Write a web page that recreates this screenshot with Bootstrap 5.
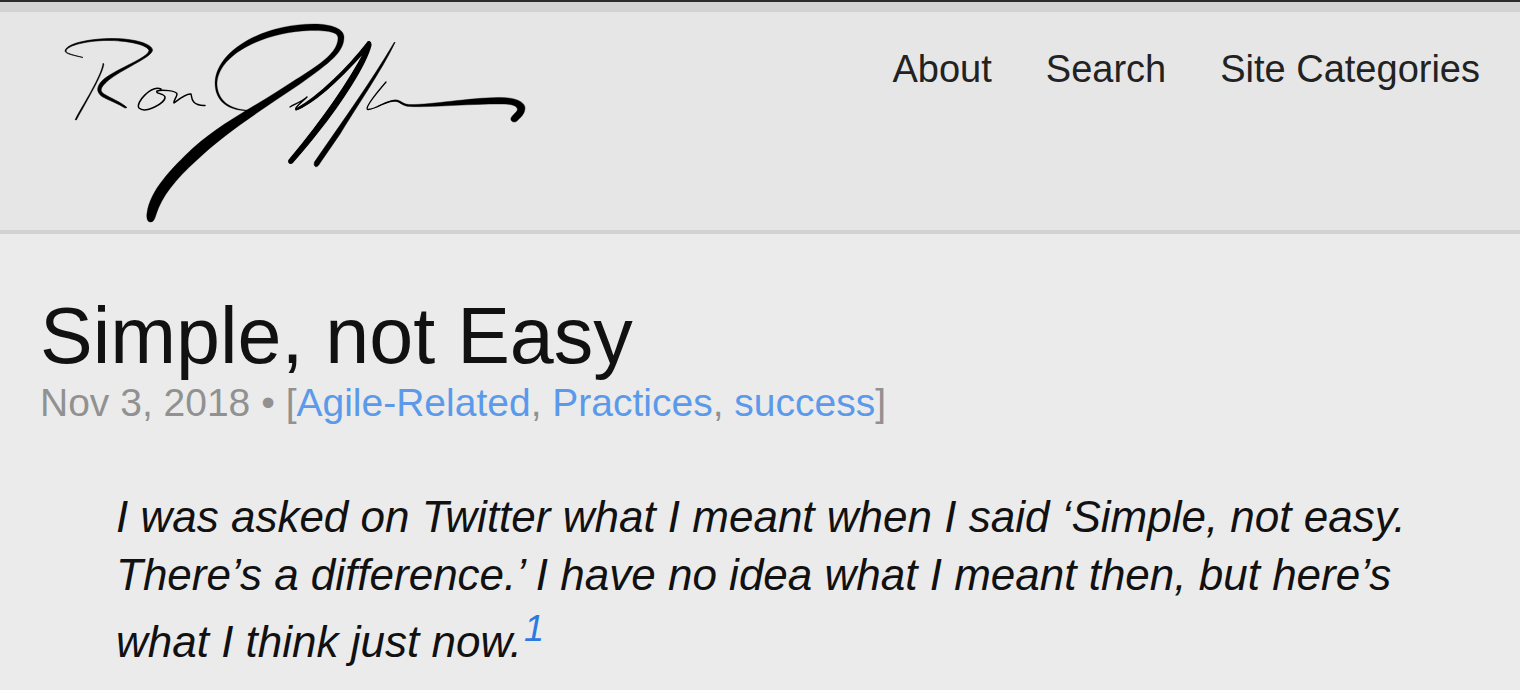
<!DOCTYPE html>
<html lang="en">
<head>
<meta charset="utf-8">
<meta name="viewport" content="width=device-width, initial-scale=1">
<title>Simple, not Easy</title>
<link href="https://cdn.jsdelivr.net/npm/bootstrap@5.3.0/dist/css/bootstrap.min.css" rel="stylesheet">
<style>
body{background:#ebebeb;color:#111;font-family:"Liberation Sans",Arial,sans-serif}
a{text-decoration:none}
.site-top{border-top:2px solid #2a2828;background:#e6e6e6;border-bottom:4px solid #d2d2d2}
.top-strip{height:10px;background:#d2d2d2}
.site-bar{padding:8px 40px 4px 60px}
.signature{width:470px;height:206px;display:block}
.site-menu{gap:54px;padding-top:20px}
.site-menu a{color:#222;font-size:38px;line-height:58px;padding:0}
.post{padding:58px 40px 24px}
.post-title{font-size:79px;line-height:88px;font-weight:400;margin:0}
.post-meta{font-size:39px;line-height:46px;color:#919191;margin:0}
.post-meta a{color:#5b9aea}
.intro{font-size:44px;line-height:58px;font-style:italic;margin:62px 38px 0 76px}
.intro sup{font-size:36px;line-height:50px;top:0;vertical-align:super;margin-left:2px}
.intro sup a{color:#2a7ae2}
</style>
</head>
<body>
<header class="site-top">
<div class="top-strip"></div>
<div class="site-bar d-flex flex-wrap justify-content-between align-items-start">
<a href="#" aria-label="Ron Jeffries">
<svg class="signature" viewBox="60 20 470 206" aria-hidden="true">
<path d="M83 57.5C76 56 65 54 65 51C66 43 92 38.5 112 38.5C135 38.5 152 44 152.5 50C152 57 128 66 110 79C99 88 100 91 104 94C110 98 121 102 127 107.5L125 108C119 104 108 100 102 96.500C96 92 96 86 104 79C118 68 148 58 149 50.5C147 45 130 41 111 40.5C90 40 67 45 66 51C66 53.5 74 55 83 57.5Z" stroke="#000" stroke-width=".6"/>
<path d="M103 63L104 64C103 73 92 92 76.5 120L75 120C78 112 101 78 103 63Z" stroke="#000" stroke-width=".3"/>
<path d="M161 89C151 85 135 103 139 108C145 114 166 103 165 97C164 93 155 94 157 91C162 89 177 91 177 94C177 97 173 101 174 103C178 100 186 93 191 94C192 96 190 106 205 105.5" fill="none" stroke="#000" stroke-width="1.5" stroke-linecap="round" stroke-linejoin="round"/>
<path d="M252 110.7C228 112 215 101 215 83C216 50 264 24 314 24C332 24 344 29 344 37C344 52 331 62 300 84C260 111 225 133 197 160C175 180 162 196 156 215C154 222 152 222 150 222C148 222 146 219 147 213C150 190 172 168 193 148C220 124 250 109 278 91C310 70 338 56 338 38C338 32 328 30.5 310 30.5C266 32 219 53 217 83C217 100 230 111 252 110Z" stroke="#000" stroke-width=".3"/>
<path d="M290 107C295 104 301 102 307 97C303 101 294 108 296 109.5C301 109 315 98 328 88" fill="none" stroke="#000" stroke-width="1.4" stroke-linecap="round" stroke-linejoin="round"/>
<path d="M296 109C320 96 349 66 367 43C369 40 371 42 371 45C366 65 341 103 318 132C308 145 300 154 293 162C290 165 287 162 290 159C314 130 345 89 365 51C348 70 319 101 296 110Z" stroke="#000" stroke-width="1.2" stroke-linejoin="round"/>
<path d="M394.5 42L395 42.5C382 70 355 109 340 134L320 163C317 169 313 167 314.5 162C342 122 371 82 394.5 42Z" stroke="#000" stroke-width=".6"/>
<path d="M386 82C380 89 363 109 368 109.5C377 109 387 100 396 100.5C400 101 402 105 408 105.5" fill="none" stroke="#000" stroke-width="1.3" stroke-linecap="round" stroke-linejoin="round"/>
<path d="M378 106C386 102 392 100 396 100C401 100 402 104 409 104.5C430 105 467 98 498 97.5C513 97 525 101 525 108C525 114 520 118 517 121C514 123.5 510 121 511 118C513 114 519 111 517 108C515 105 510 104 500 104C467 104 430 107.5 410 106.5C401 106 401 102 396 101.5C391 101 386 103 378 106Z" stroke="#000" stroke-width=".4"/>
</svg>
</a>
<nav class="site-menu nav" aria-label="Main">
<a class="nav-link" href="#">About</a>
<a class="nav-link" href="#">Search</a>
<a class="nav-link" href="#">Site Categories</a>
</nav>
</div>
</header>
<main class="post">
<h1 class="post-title">Simple, not Easy</h1>
<p class="post-meta">Nov 3, 2018 • [<a href="#">Agile-Related</a>, <a href="#">Practices</a>, <a href="#">success</a>]</p>
<p class="intro">I was asked on Twitter what I meant when I said ‘Simple, not easy. There’s a difference.’ I have no idea what I meant then, but here’s what I think just now.<sup><a href="#">1</a></sup></p>
</main>
</body>
</html>
